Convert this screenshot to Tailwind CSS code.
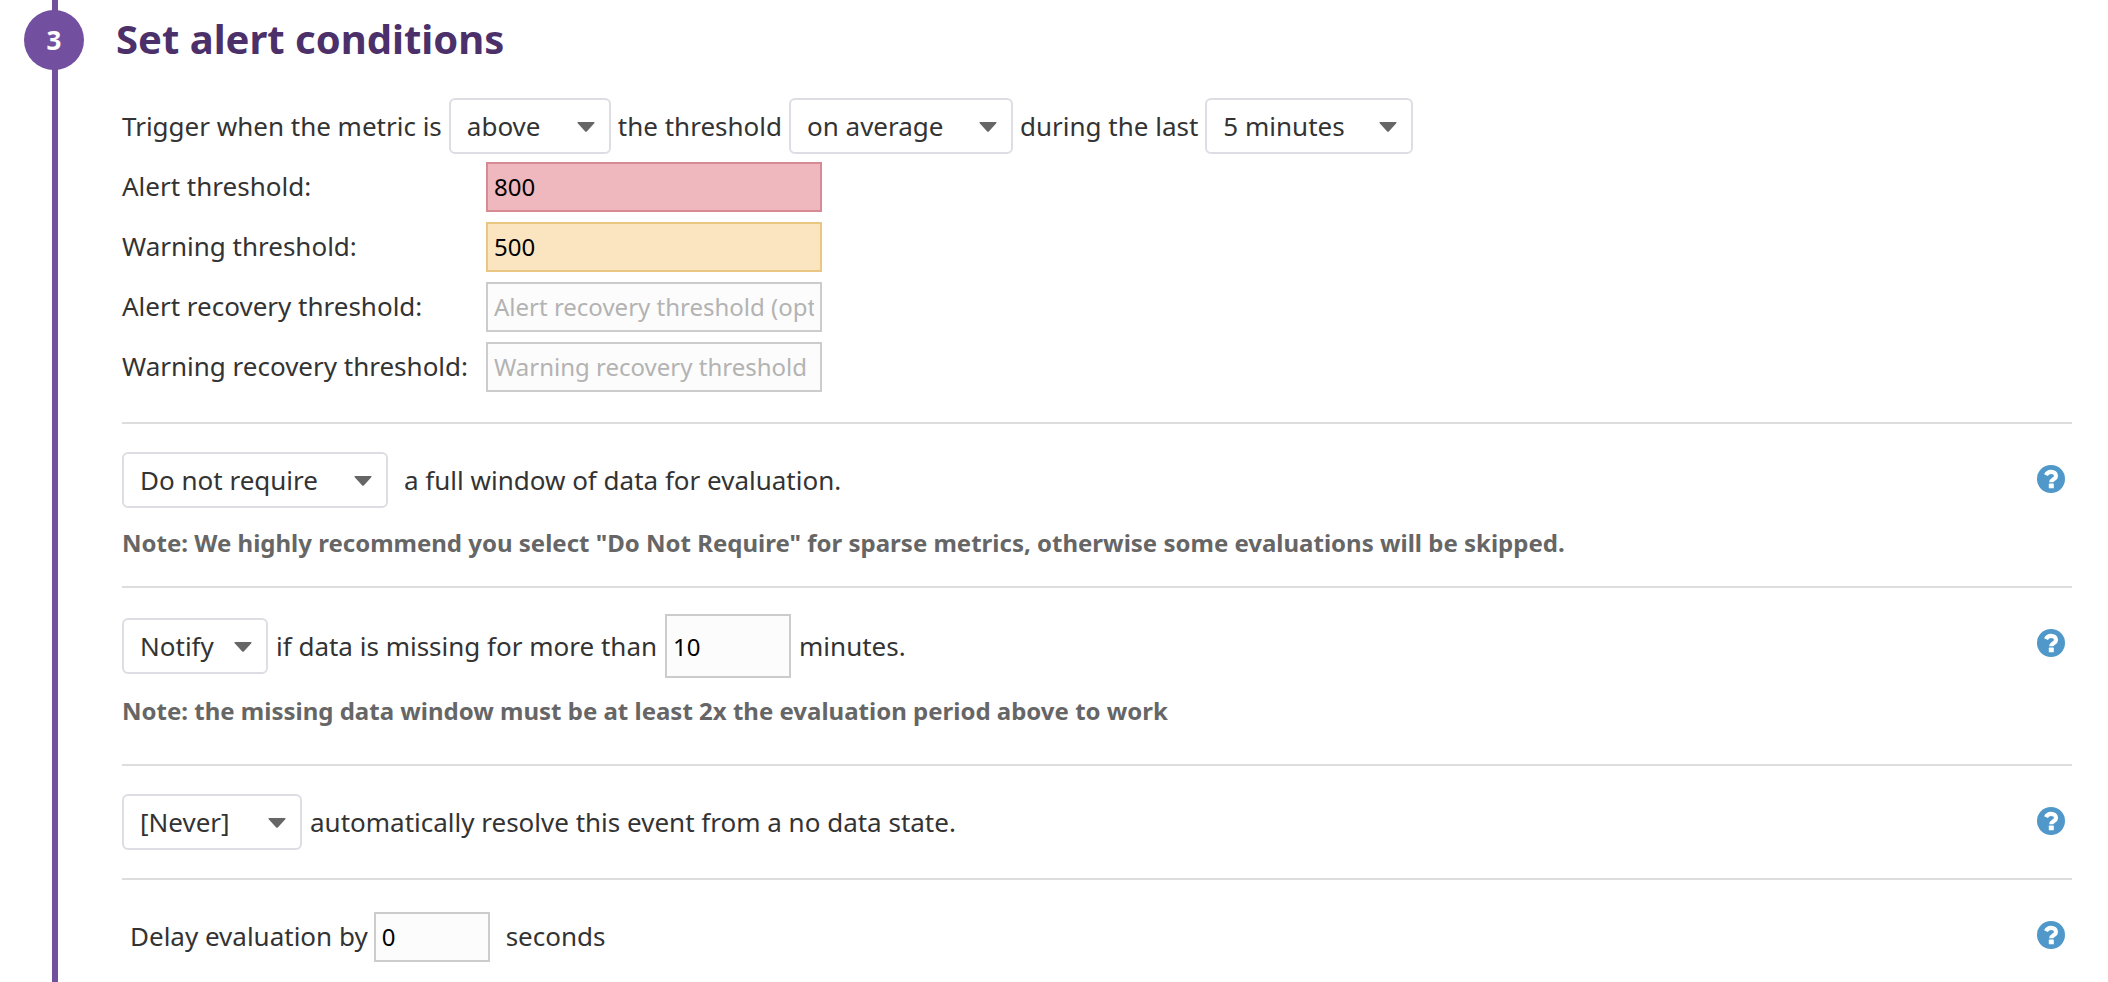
<!DOCTYPE html>
<html lang="en">
<head>
<meta charset="utf-8">
<meta name="viewport" content="width=device-width, initial-scale=1">
<title>Set alert conditions</title>
<script src="https://cdn.jsdelivr.net/npm/@tailwindcss/browser@4"></script>
</head>
<body class="bg-white font-['Noto_Sans',sans-serif] text-[26px] leading-9 text-[#333333]">
<svg class="hidden" aria-hidden="true">
  <symbol id="help" viewBox="0 0 28 28">
    <circle cx="14" cy="14" r="14" fill="#4f98c9"/>
    <path d="M9 10.200C10 7.900 11.700 6.900 14 6.900c3 0 5 1.600 5 4 0 3.400-4.700 3.300-4.700 6.300" fill="none" stroke="#fff" stroke-width="4.200"/>
    <rect x="11.800" y="18.600" width="5" height="4.700" rx=".6" fill="#fff"/>
  </symbol>
  <symbol id="caret" viewBox="0 0 18 10">
    <path d="M1.300 0h15.400c.8 0 1 .6.6 1.200l-7.300 8.100c-.6.7-1.400.7-2 0L.7 1.200C.3.600.5 0 1.300 0z" fill="#666"/>
  </symbol>
</svg>

<main class="flex min-h-screen">
  <div class="relative w-[110px] shrink-0">
    <div class="absolute inset-y-0 left-[52px] w-[6px] bg-[#734fa0]"></div>
    <div class="absolute left-6 top-[10px] flex size-[60px] items-center justify-center rounded-full bg-[#734fa0] text-[26px] font-bold text-white">3</div>
  </div>

  <form class="mr-9 min-w-0 flex-1 pt-[11px]">
    <h1 class="pl-[6px] text-[40px] leading-[56px] font-bold text-[#4b306a]">Set alert conditions</h1>

    <div class="ml-3">
      <section class="pt-[31px] pb-[30px]">
        <div class="flex items-center gap-[7px]">
          <label for="comparison">Trigger when the metric is</label>
          <span class="relative">
            <select id="comparison" class="block h-14 w-[162px] appearance-none rounded-md border-2 border-[#dddde3] bg-white pl-4"><option>above</option><option>below</option></select>
            <svg class="pointer-events-none absolute right-4 top-6 h-[10px] w-[18px]"><use href="#caret"/></svg>
          </span>
          <label for="aggregation">the threshold</label>
          <span class="relative">
            <select id="aggregation" class="block h-14 w-[224px] appearance-none rounded-md border-2 border-[#dddde3] bg-white pl-4"><option>on average</option><option>at least once</option></select>
            <svg class="pointer-events-none absolute right-4 top-6 h-[10px] w-[18px]"><use href="#caret"/></svg>
          </span>
          <label for="period">during the last</label>
          <span class="relative">
            <select id="period" class="block h-14 w-[208px] appearance-none rounded-md border-2 border-[#dddde3] bg-white pl-4"><option>5 minutes</option><option>10 minutes</option></select>
            <svg class="pointer-events-none absolute right-4 top-6 h-[10px] w-[18px]"><use href="#caret"/></svg>
          </span>
        </div>

        <div class="mt-2 grid grid-cols-[364px_336px] items-center gap-y-[10px]">
          <label for="alert" class="pb-[2px]">Alert threshold:</label>
          <input id="alert" type="text" value="800" class="h-[50px] w-full border-2 border-[#d68a93] bg-[#eeb8be] px-[6px] pb-[2px] text-2xl text-black">
          <label for="warning" class="pb-[2px]">Warning threshold:</label>
          <input id="warning" type="text" value="500" class="h-[50px] w-full border-2 border-[#e9c783] bg-[#fbe5c0] px-[6px] pb-[2px] text-2xl text-black">
          <label for="alert-recovery" class="pb-[2px]">Alert recovery threshold:</label>
          <input id="alert-recovery" type="text" placeholder="Alert recovery threshold (optional)" class="h-[50px] w-full border-2 border-[#cccccc] bg-[#fcfcfc] px-[6px] pb-[2px] text-2xl text-black placeholder:text-[#b3b3b3]">
          <label for="warning-recovery" class="pb-[2px]">Warning recovery threshold:</label>
          <input id="warning-recovery" type="text" placeholder="Warning recovery threshold (optional)" class="h-[50px] w-full border-2 border-[#cccccc] bg-[#fcfcfc] px-[6px] pb-[2px] text-2xl text-black placeholder:text-[#b3b3b3]">
        </div>
      </section>

      <section class="flex items-start justify-between border-t-2 border-[#dddddd] pt-7 pb-[25px]">
        <div>
          <div class="flex items-center gap-4">
            <span class="relative">
              <select id="window" class="block h-14 w-[266px] appearance-none rounded-md border-2 border-[#dddde3] bg-white pl-4"><option>Do not require</option><option>Require</option></select>
              <svg class="pointer-events-none absolute right-4 top-6 h-[10px] w-[18px]"><use href="#caret"/></svg>
            </span>
            <label for="window">a full window of data for evaluation.</label>
          </div>
          <p class="mt-[17px] text-2xl leading-9 font-bold text-[#666666]">Note: We highly recommend you select "Do Not Require" for sparse metrics, otherwise some evaluations will be skipped.</p>
        </div>
        <button type="button" aria-label="Help" class="mt-[13px] mr-[7px]"><svg class="block size-7"><use href="#help"/></svg></button>
      </section>

      <section class="flex items-start justify-between border-t-2 border-[#dddddd] pt-[26px] pb-[35px]">
        <div>
          <div class="flex items-center gap-2">
            <span class="relative">
              <select id="missing" class="block h-14 w-[146px] appearance-none rounded-md border-2 border-[#dddde3] bg-white pl-4"><option>Notify</option><option>Do not notify</option></select>
              <svg class="pointer-events-none absolute right-4 top-6 h-[10px] w-[18px]"><use href="#caret"/></svg>
            </span>
            <label for="missing">if data is missing for more than</label>
            <input id="missing-minutes" type="text" value="10" class="h-16 w-[126px] border-2 border-[#cccccc] bg-[#fcfcfc] px-[6px] text-2xl text-black">
            <label for="missing-minutes">minutes.</label>
          </div>
          <p class="mt-[15px] text-2xl leading-9 font-bold text-[#666666]">Note: the missing data window must be at least 2x the evaluation period above to work</p>
        </div>
        <button type="button" aria-label="Help" class="mt-[15px] mr-[7px]"><svg class="block size-7"><use href="#help"/></svg></button>
      </section>

      <section class="flex items-start justify-between border-t-2 border-[#dddddd] py-7">
        <div class="flex items-center gap-2">
          <span class="relative">
            <select id="resolve" class="block h-14 w-[180px] appearance-none rounded-md border-2 border-[#dddde3] bg-white pl-4"><option>[Never]</option><option>1 hour</option></select>
            <svg class="pointer-events-none absolute right-4 top-6 h-[10px] w-[18px]"><use href="#caret"/></svg>
          </span>
          <label for="resolve">automatically resolve this event from a no data state.</label>
        </div>
        <button type="button" aria-label="Help" class="mt-[13px] mr-[7px]"><svg class="block size-7"><use href="#help"/></svg></button>
      </section>

      <section class="flex items-start justify-between border-t-2 border-[#dddddd] pt-8">
        <div class="flex items-center pl-2">
          <label for="delay" class="pb-[2px]">Delay evaluation by</label>
          <input id="delay" type="text" value="0" class="mr-4 ml-[6px] h-[50px] w-[116px] border-2 border-[#cccccc] bg-[#fcfcfc] px-[6px] pb-[2px] text-2xl text-black">
          <label for="delay" class="pb-[2px]">seconds</label>
        </div>
        <button type="button" aria-label="Help" class="mt-[9px] mr-[7px]"><svg class="block size-7"><use href="#help"/></svg></button>
      </section>
    </div>
  </form>
</main>
</body>
</html>
